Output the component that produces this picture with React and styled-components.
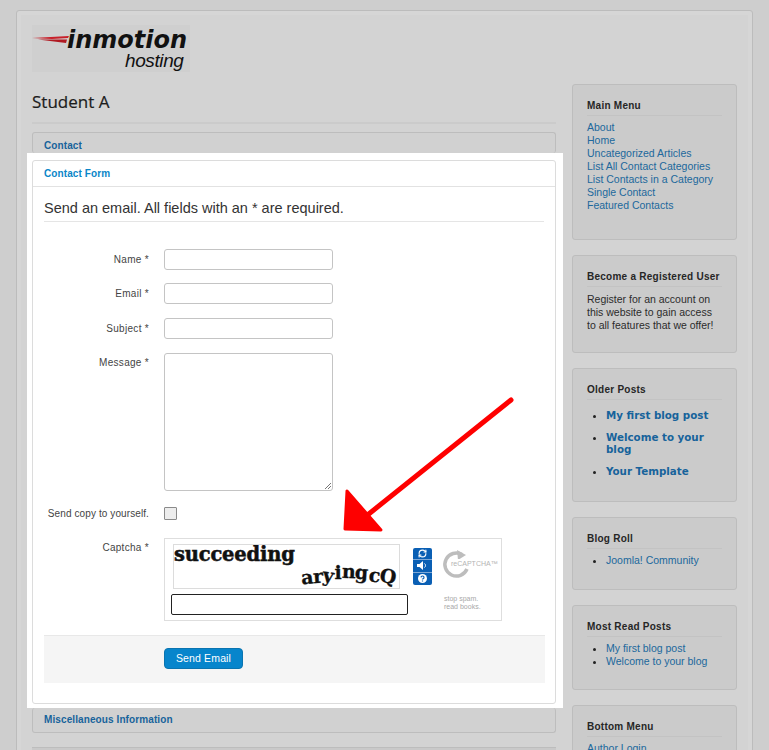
import React from 'react';
import styled, { createGlobalStyle } from 'styled-components';
import { RefreshCw } from 'lucide-react';

const GlobalStyle = createGlobalStyle`
  html, body {
    margin: 0;
    height: 750px;
    overflow: hidden;
    background: #cecece;
  }
  body {
    font-family: "Liberation Sans", Arial, sans-serif;
    font-size: 10.5px;
    color: #2a2a2a;
  }
`;

const Page = styled.div`
  position: relative;
  width: 769px;
  height: 750px;
  overflow: hidden;
  padding: 10px 16px 0;
  box-sizing: border-box;
`;

const Sheet = styled.div`
  width: 737px;
  height: 800px;
  box-sizing: border-box;
  background: #d3d3d3;
  border: 1px solid #bcbcbc;
  border-radius: 3px;
  box-shadow: inset 0 0 0 4px #d6d6d6;
  padding: 14px 15px 0;
`;

const LogoBox = styled.div`
  width: 158px;
  height: 47px;
  background: #cfcfcf;
  color: #111;
`;

const LogoTop = styled.div`
  display: flex;
  align-items: center;
  height: 27px;
  padding-top: 3px;
  box-sizing: border-box;
`;

const LogoName = styled.span`
  font-family: "DejaVu Sans", sans-serif;
  font-size: 24px;
  font-weight: bold;
  font-style: italic;
  line-height: 24px;
  margin-left: -2px;
`;

const LogoSub = styled.div`
  font-size: 19px;
  font-style: italic;
  line-height: 18px;
  margin-left: 93px;
  letter-spacing: -0.4px;
`;

const Columns = styled.div`
  display: flex;
  gap: 16px;
`;

const Main = styled.div`
  width: 524px;
`;

const Title = styled.h1`
  margin: 18px 0 0;
  padding-bottom: 10px;
  height: 22px;
  font-family: "Open Sans", sans-serif;
  font-size: 17px;
  line-height: 23px;
  font-weight: 400;
  color: #1c1c1c;
  border-bottom: 2px solid #cbcbcb;
  -webkit-text-stroke: 0.2px #1c1c1c;
`;

const Sidebar = styled.aside`
  width: 165px;
  margin-top: 12px;
  display: flex;
  flex-direction: column;
  gap: 15px;
`;

const Module = styled.section`
  box-sizing: border-box;
  height: ${(p) => p.$h}px;
  flex: none;
  background: #cbcbcb;
  border: 1px solid #bdbdbd;
  border-radius: 3px;
  padding: 14px 14px 0;
  line-height: 13px;
  color: #2b2b2b;
`;

const ModuleTitle = styled.h3`
  margin: 0 0 5px;
  padding-bottom: 3px;
  font-size: 10px;
  line-height: 13px;
  letter-spacing: 0.25px;
  font-weight: bold;
  white-space: nowrap;
  color: #262626;
  border-bottom: 1px solid #c3c3c3;
`;

const ModuleText = styled.p`
  margin: 6px 0 0;
`;

const MenuLink = styled.a`
  display: block;
  color: #20689c;
  line-height: 13px;
`;

const Bullets = styled.ul`
  margin: ${(p) => p.$top || 1}px 0 0;
  padding: 0 0 0 19px;
  list-style: disc;
  li::marker {
    color: #222;
  }
`;

const BoldItem = styled.li`
  margin-bottom: 10px;
  line-height: 12px;
  font-family: "DejaVu Sans", sans-serif;
  font-size: 10.3px;
  font-weight: bold;
  color: #17639b;
`;

const PlainItem = styled.li`
  line-height: 13px;
  color: #20689c;
`;

const Bar = styled.div`
  box-sizing: border-box;
  height: ${(p) => p.$h}px;
  background: #d1d1d1;
  border: 1px solid #bdbdbd;
  border-top-width: ${(p) => (p.$open ? 1 : 0)}px;
  border-bottom-width: ${(p) => (p.$open ? 0 : 1)}px;
  border-radius: 3px;
  padding: ${(p) => p.$top}px 11px 0;
  font-size: 10px;
  line-height: 13px;
  font-weight: bold;
  letter-spacing: 0.1px;
  color: #17639b;
`;

const ContactBar = styled(Bar)`
  margin-top: 8px;
`;

const NextBar = styled.div`
  margin-top: 14px;
  height: 20px;
  background: #c9c9c9;
  border-top: 1px solid #bdbdbd;
`;

const Highlight = styled.div`
  box-sizing: border-box;
  margin: 0 -7px 0 -5px;
  height: 555px;
  padding: 7px 7px 0 5px;
  background: #fff;
`;

const Card = styled.div`
  box-sizing: border-box;
  height: 544px;
  border: 1px solid #dcdcdc;
  border-radius: 3px;
`;

const CardHead = styled.div`
  box-sizing: border-box;
  height: 26px;
  padding: 6px 11px 0;
  border-bottom: 1px solid #e2e2e2;
  font-size: 10px;
  line-height: 13px;
  font-weight: bold;
  letter-spacing: 0.1px;
  color: #0a86c8;
`;

const CardBody = styled.div`
  padding: 12px 11px 0;
`;

const Legend = styled.div`
  box-sizing: border-box;
  height: 23px;
  font-size: 14.5px;
  line-height: 18px;
  color: #333;
  border-bottom: 1px solid #e5e5e5;
`;

const Row = styled.div`
  display: grid;
  grid-template-columns: 105px 1fr;
  column-gap: 15px;
  align-items: ${(p) => p.$align || 'center'};
  margin-top: ${(p) => p.$top}px;
`;

const Label = styled.label`
  text-align: right;
  font-size: 10px;
  line-height: 13px;
  letter-spacing: 0.3px;
  white-space: nowrap;
  color: #444;
  padding-top: ${(p) => p.$pad || 0}px;
`;

const LongLabel = styled(Label)`
  letter-spacing: 0.1px;
`;

const TextBox = styled.div`
  box-sizing: border-box;
  width: 169px;
  height: ${(p) => p.$h || 21}px;
  background: #fff;
  border: 1px solid #c4c4c4;
  border-radius: 3px;
  position: relative;
`;

const Grip = styled.svg`
  position: absolute;
  right: 0;
  bottom: 0;
`;

const Checkbox = styled.div`
  box-sizing: border-box;
  width: 13px;
  height: 13px;
  background: #ededed;
  border: 1px solid #8a8a8a;
  border-radius: 1px;
`;

const Captcha = styled.div`
  box-sizing: border-box;
  width: 338px;
  height: 83px;
  border: 1px solid #dedede;
  padding: 5px 0 0 6px;
  display: grid;
  grid-template-columns: 237px 24px 1fr;
  grid-template-rows: 45px 21px;
  row-gap: 5px;
  column-gap: 5px;
`;

const CaptchaImage = styled.div`
  box-sizing: border-box;
  margin-left: 2px;
  width: 227px;
  height: 45px;
  border: 1px solid #dcdcdc;
  position: relative;
  overflow: hidden;
  font-family: "DejaVu Serif", serif;
  font-weight: bold;
  color: #111;
`;

const CaptchaWord = styled.span`
  position: absolute;
  left: 0;
  top: -2px;
  font-size: 19.5px;
  line-height: 24px;
  letter-spacing: -0.2px;
  -webkit-text-stroke: 0.5px #111;
`;

const CaptchaWave = styled.span`
  position: absolute;
  left: 127px;
  top: 20px;
  font-size: 19px;
  line-height: 22px;
  white-space: nowrap;
  -webkit-text-stroke: 0.3px #111;
`;

const WaveLetter = styled.span`
  display: inline-block;
  transform: translateY(${(p) => p.$y}px) rotate(${(p) => p.$r}deg);
`;

const CaptchaTools = styled.div`
  grid-row: 1;
  grid-column: 2;
  width: 19px;
  height: 37px;
  margin-top: 4px;
  background: #0a5fb4;
  border-radius: 2px;
  display: grid;
  grid-template-rows: repeat(3, 1fr);
  color: #fff;
`;

const ToolButton = styled.div`
  display: flex;
  align-items: center;
  justify-content: center;
  border-bottom: 1px solid #7fa8d6;
  &:last-child {
    border-bottom: 0;
  }
`;

const CaptchaBrand = styled.div`
  grid-row: 1;
  grid-column: 3;
  position: relative;
  margin-top: 6px;
  height: 32px;
`;

const BrandName = styled.span`
  position: absolute;
  left: 9px;
  top: 9px;
  font-size: 7px;
  line-height: 9px;
  color: #b4b4b4;
  background: #fff;
  white-space: nowrap;
`;

const CaptchaInput = styled.div`
  box-sizing: border-box;
  width: 237px;
  height: 21px;
  grid-row: 2;
  grid-column: 1;
  border: 1px solid #222;
  border-radius: 2px;
`;

const Slogan = styled.div`
  grid-row: 2;
  grid-column: 3;
  font-size: 7px;
  line-height: 8px;
  color: #a8a8a8;
  padding: 1px 0 0 2px;
`;

const Actions = styled.div`
  box-sizing: border-box;
  margin-top: 14px;
  height: 48px;
  width: 501px;
  background: #f5f5f5;
  border-top: 1px solid #e8e8e8;
  padding: 12px 0 0 120px;
`;

const SendButton = styled.div`
  box-sizing: border-box;
  width: 79px;
  height: 21px;
  background: #0785cc;
  border: 1px solid #0a74b0;
  border-radius: 4px;
  color: #fff;
  line-height: 19px;
  letter-spacing: 0.15px;
  text-align: center;
`;

const Arrow = styled.svg`
  position: absolute;
  left: 0;
  top: 0;
  pointer-events: none;
`;

const mainMenu = [
  'About',
  'Home',
  'Uncategorized Articles',
  'List All Contact Categories',
  'List Contacts in a Category',
  'Single Contact',
  'Featured Contacts',
];

const waveLetters = [
  { c: 'a', y: 1, r: -6 },
  { c: 'r', y: 0, r: -4 },
  { c: 'y', y: -1, r: 8 },
  { c: 'i', y: -4, r: 0 },
  { c: 'n', y: -5, r: 2 },
  { c: 'g', y: -4, r: 4 },
  { c: 'c', y: -1, r: 6 },
  { c: 'Q', y: 0, r: 8 },
];

function App() {
  return (
    <Page>
      <GlobalStyle />
      <Sheet>
        <LogoBox>
          <LogoTop>
            <svg width="37" height="10" viewBox="0 0 37 10">
              <path d="M0 3 L37 1 L36 3 L20 4 Z" fill="#c8202a" />
              <path d="M6 4.5 L35 4.5 L34 8 Z" fill="#b01a22" />
            </svg>
            <LogoName>inmotion</LogoName>
          </LogoTop>
          <LogoSub>hosting</LogoSub>
        </LogoBox>
        <Columns>
          <Main>
            <Title>Student A</Title>
            <ContactBar $h={21} $top={6} $open>Contact</ContactBar>
            <Highlight>
              <Card>
                <CardHead>Contact Form</CardHead>
                <CardBody>
                  <Legend>Send an email. All fields with an * are required.</Legend>
                  <Row $top={27}><Label>Name *</Label><TextBox /></Row>
                  <Row $top={13}><Label>Email *</Label><TextBox /></Row>
                  <Row $top={14}><Label>Subject *</Label><TextBox /></Row>
                  <Row $top={14} $align="start">
                    <Label $pad={3}>Message *</Label>
                    <TextBox $h={138}>
                      <Grip width="9" height="9" viewBox="0 0 9 9">
                        <path d="M8 2 L2 8 M8 5 L5 8" stroke="#777" fill="none" />
                      </Grip>
                    </TextBox>
                  </Row>
                  <Row $top={16}><LongLabel>Send copy to yourself.</LongLabel><Checkbox /></Row>
                  <Row $top={18} $align="start">
                    <Label $pad={3}>Captcha *</Label>
                    <Captcha>
                      <CaptchaImage>
                        <CaptchaWord>succeeding</CaptchaWord>
                        <CaptchaWave>
                          {waveLetters.map((l, i) => (
                            <WaveLetter key={i} $y={l.y} $r={l.r}>{l.c}</WaveLetter>
                          ))}
                        </CaptchaWave>
                      </CaptchaImage>
                      <CaptchaTools>
                        <ToolButton><RefreshCw size={9} strokeWidth={3} /></ToolButton>
                        <ToolButton>
                          <svg width="11" height="9" viewBox="0 0 11 9">
                            <path d="M0 3 H2.5 L6 0 V9 L2.5 6 H0 Z" fill="#fff" />
                            <path d="M7.5 2.5 A2.5 2.5 0 0 1 7.5 6.5" fill="none" stroke="#fff" strokeWidth="1" />
                          </svg>
                        </ToolButton>
                        <ToolButton>
                          <svg width="9" height="9" viewBox="0 0 9 9">
                            <circle cx="4.5" cy="4.5" r="4.5" fill="#fff" />
                            <path d="M3 3.4 A1.5 1.5 0 1 1 4.5 5 V5.6 M4.5 6.5 V7.6" fill="none" stroke="#0a5fb4" strokeWidth="1.2" />
                          </svg>
                        </ToolButton>
                      </CaptchaTools>
                      <CaptchaBrand>
                        <svg width="32" height="30" viewBox="0 0 32 30">
                          <path d="M20 4.5 A11.5 11.5 0 1 0 25 19" fill="none" stroke="#bdbdbd" strokeWidth="3.5" />
                          <path d="M15 0 L24 5 L16 10 Z" fill="#bdbdbd" />
                        </svg>
                        <BrandName>reCAPTCHA™</BrandName>
                      </CaptchaBrand>
                      <CaptchaInput />
                      <Slogan>stop spam.<br />read books.</Slogan>
                    </Captcha>
                  </Row>
                  <Actions><SendButton>Send Email</SendButton></Actions>
                </CardBody>
              </Card>
            </Highlight>
            <Bar $h={25} $top={5}>Miscellaneous Information</Bar>
            <NextBar />
          </Main>
          <Sidebar>
            <Module $h={156}>
              <ModuleTitle>Main Menu</ModuleTitle>
              {mainMenu.map((item) => <MenuLink key={item}>{item}</MenuLink>)}
            </Module>
            <Module $h={98}>
              <ModuleTitle>Become a Registered User</ModuleTitle>
              <ModuleText>Register for an account on this website to gain access to all features that we offer!</ModuleText>
            </Module>
            <Module $h={134}>
              <ModuleTitle>Older Posts</ModuleTitle>
              <Bullets $top={9}>
                <BoldItem>My first blog post</BoldItem>
                <BoldItem>Welcome to your blog</BoldItem>
                <BoldItem>Your Template</BoldItem>
              </Bullets>
            </Module>
            <Module $h={73}>
              <ModuleTitle>Blog Roll</ModuleTitle>
              <Bullets>
                <PlainItem>Joomla! Community</PlainItem>
              </Bullets>
            </Module>
            <Module $h={85}>
              <ModuleTitle>Most Read Posts</ModuleTitle>
              <Bullets>
                <PlainItem>My first blog post</PlainItem>
                <PlainItem>Welcome to your blog</PlainItem>
              </Bullets>
            </Module>
            <Module $h={80}>
              <ModuleTitle>Bottom Menu</ModuleTitle>
              <MenuLink>Author Login</MenuLink>
            </Module>
          </Sidebar>
        </Columns>
      </Sheet>
      <Arrow width="769" height="750" viewBox="0 0 769 750">
        <path d="M511 400 L365 517" stroke="#fe0000" strokeWidth="5" strokeLinecap="round" fill="none" />
        <path d="M347 491 L345 529 L381 530 Z" fill="#fe0000" stroke="#fe0000" strokeWidth="3" strokeLinejoin="round" />
      </Arrow>
    </Page>
  );
}

export default App;
